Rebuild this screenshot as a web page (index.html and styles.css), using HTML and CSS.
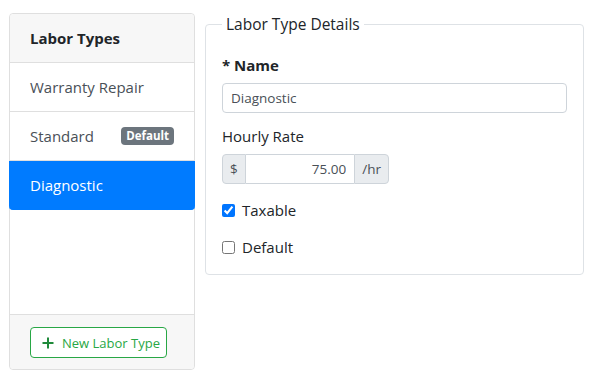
FILE: index.html
```html
<!DOCTYPE html>
<html lang="en">
<head>
  <meta charset="UTF-8" />
  <title>Labor Types</title>
  <link rel="stylesheet" href="styles.css">
</head>
<body>

  <div class="page">
    <div class="card">
      <div class="card-header">Labor Types</div>
      <div class="list">
        <a href="#" class="list-item">Warranty Repair</a>
        <a href="#" class="list-item">Standard <span class="badge">Default</span></a>
        <a href="#" class="list-item active">Diagnostic</a>
      </div>
      <div class="card-footer">
        <button class="btn-new">
          <svg width="12" height="12" viewBox="0 0 12 12"><path d="M6 0.5v11M0.5 6h11" stroke="#1f8a3a" stroke-width="2"/></svg>
          New Labor Type
        </button>
      </div>
    </div>

    <fieldset class="details">
      <legend>Labor Type Details</legend>

      <label class="label-strong">* Name</label>
      <input type="text" class="field" value="Diagnostic" />

      <label class="label">Hourly Rate</label>
      <div class="input-group">
        <span class="addon">$</span>
        <input type="text" class="field rate" value="75.00" />
        <span class="addon">/hr</span>
      </div>

      <label class="check"><input type="checkbox" checked /> Taxable</label>
      <label class="check"><input type="checkbox" /> Default</label>
    </fieldset>
  </div>

</body>
</html>
```

FILE: styles.css
```css
body {
  font-family: "Open Sans", Arial, sans-serif;
  font-size: 15px;
  line-height: 24px;
  color: #212529;
  margin: 0;
  background: #fff;
}

.page {
  display: flex;
  align-items: flex-start;
  gap: 10px;
  padding: 13px 9px 0 9px;
}

.card {
  width: 186px;
  height: 357px;
  box-sizing: border-box;
  border: 1px solid #dfdfdf;
  border-radius: 4px;
  display: flex;
  flex-direction: column;
  flex-shrink: 0;
}

.card-header {
  background: #f7f7f7;
  border-bottom: 1px solid #dfdfdf;
  padding: 12px 20px;
  font-weight: bold;
  border-radius: 4px 4px 0 0;
}

.list {
  flex: 1;
}

.list-item {
  display: flex;
  justify-content: space-between;
  align-items: center;
  padding: 12px 20px;
  border-bottom: 1px solid #dfdfdf;
  color: #495057;
  text-decoration: none;
}

.list-item.active {
  background: #007bff;
  color: white;
  border-bottom-color: #007bff;
  border-radius: 0 0 4px 4px;
  margin: 0 -1px;
  padding: 12px 21px;
}

.badge {
  background: #6c757d;
  color: white;
  font-size: 11.5px;
  font-weight: bold;
  line-height: 18px;
  padding: 0 5px;
  border-radius: 4px;
}

.card-footer {
  background: #f7f7f7;
  border-top: 1px solid #dfdfdf;
  padding: 12px 20px;
  border-radius: 0 0 4px 4px;
  height: 55px;
  box-sizing: border-box;
}

.btn-new {
  display: flex;
  align-items: center;
  gap: 8px;
  height: 31px;
  padding: 0 6px 0 11px;
  font-family: inherit;
  font-size: 13px;
  color: #28a745;
  background: white;
  border: 1px solid #28a745;
  border-radius: 4px;
  cursor: pointer;
}

.details {
  flex: 1;
  margin: -1px 0 0;
  padding: 17px 16px 15px;
  border: 1px solid #dee2e6;
  border-radius: 4px;
  display: flex;
  flex-direction: column;
  align-items: flex-start;
}

.details legend {
  padding: 0 4px;
  font-size: 15.5px;
  line-height: 24px;
}

.label-strong {
  font-weight: bold;
  margin-bottom: 6px;
}

.label {
  margin-top: 11px;
  margin-bottom: 6px;
}

.field {
  width: 100%;
  box-sizing: border-box;
  height: 30px;
  padding: 0 8px;
  font-family: inherit;
  font-size: 13.5px;
  color: #495057;
  border: 1px solid #ced4da;
  border-radius: 4px;
}

.input-group {
  display: flex;
  width: 167px;
  height: 30px;
}

.addon {
  background: #e9ecef;
  border: 1px solid #ced4da;
  color: #495057;
  font-size: 13.5px;
  line-height: 28px;
  padding: 0 7px;
}

.addon:first-child {
  border-radius: 4px 0 0 4px;
}

.addon:last-child {
  border-radius: 0 4px 4px 0;
}

.field.rate {
  width: auto;
  flex: 1;
  min-width: 0;
  height: 30px;
  border-radius: 0;
  border-left: none;
  border-right: none;
  text-align: right;
}

.check {
  display: flex;
  align-items: center;
  margin-top: 14px;
}

.check + .check {
  margin-top: 13px;
}

.check input {
  width: 13px;
  height: 13px;
  margin: 0 7px 0 0;
}
```
